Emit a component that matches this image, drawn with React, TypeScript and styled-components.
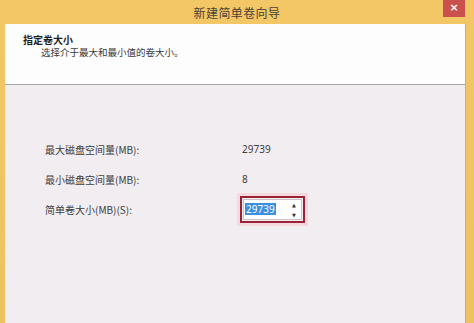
import React from "react";
import styled, { createGlobalStyle } from "styled-components";

const Global = createGlobalStyle`
  html, body { margin: 0; padding: 0; background: #f1c563; }
  body { font-family: "Noto Sans CJK SC", "Noto Sans", sans-serif; }
  * { box-sizing: border-box; }
`;

const Window = styled.div`
  width: 474px;
  height: 323px;
  display: flex;
  flex-direction: column;
  background: linear-gradient(#f3c766, #efc260);
  overflow: hidden;
`;

const TitleBar = styled.div`
  height: 24px;
  flex: none;
  display: grid;
  grid-template-columns: 1fr auto 1fr;
  align-items: start;
`;

const Title = styled.div`
  grid-column: 2;
  height: 24px;
  line-height: 25px;
  font-size: 12px;
  letter-spacing: 0.4px;
  color: #4a4236;
`;

const CloseButton = styled.div`
  grid-column: 3;
  justify-self: end;
  margin-right: 9px;
  width: 22px;
  height: 17px;
  background: #c9504c;
  color: #fff;
  font-family: "DejaVu Sans", sans-serif;
  font-size: 11px;
  font-weight: bold;
  line-height: 16px;
  text-align: center;
`;

const Client = styled.div`
  flex: 1;
  margin: 0 8px 0 5px;
  display: flex;
  flex-direction: column;
  border-right: 1px solid #dcae4f;
`;

const Header = styled.div`
  height: 61px;
  flex: none;
  background: #fdfdfd;
  border-bottom: 1px solid #a4a2a4;
  padding: 9px 0 0 18px;
`;

const HeaderTitle = styled.div`
  font-size: 10px;
  font-weight: bold;
  line-height: 13px;
  color: #1e1e1e;
`;

const HeaderSub = styled.div`
  font-size: 9.5px;
  line-height: 13px;
  color: #3a3a3a;
  margin-left: 18px;
`;

const Body = styled.div`
  flex: 1;
  background: #f1edf1;
  padding: 49px 0 0 40px;
  display: flex;
  flex-direction: column;
`;

const Row = styled.div`
  height: 30px;
  display: grid;
  grid-template-columns: 197px auto;
  align-items: center;
`;

const Label = styled.div`
  font-size: 10px;
  color: #3c3c3c;
`;

const Value = styled.div`
  font-family: "Noto Sans", sans-serif;
  font-size: 10px;
  color: #3c3c3c;
`;

const Highlight = styled.div`
  width: 65px;
  height: 27px;
  margin-left: -2px;
  border: 2px solid #9c2236;
  padding: 1px;
  box-shadow: 0 0 0 3px rgba(250, 200, 205, 0.55);
  display: flex;
`;

const SpinBox = styled.div`
  flex: 1;
  display: flex;
  align-items: center;
  background: #ffffff;
  border: 1px solid #c8c6c8;
  padding-left: 1px;
`;

const Selected = styled.span`
  font-family: "Noto Sans", sans-serif;
  font-size: 10px;
  line-height: 12px;
  background: #3b8ee0;
  color: #ffffff;
  padding: 0 1px;
`;

const Spacer = styled.div`
  flex: 1;
`;

const Spinner = styled.div`
  width: 10px;
  height: 100%;
  display: flex;
  flex-direction: column;
  margin-right: 2px;
`;

const SpinArrow = styled.div`
  flex: 1;
  font-family: "DejaVu Sans", sans-serif;
  font-size: 5px;
  line-height: 10px;
  text-align: center;
  color: #333;
`;

export default function App() {
  return (
    <>
      <Global />
      <Window>
        <TitleBar>
          <Title>新建简单卷向导</Title>
          <CloseButton>×</CloseButton>
        </TitleBar>
        <Client>
          <Header>
            <HeaderTitle>指定卷大小</HeaderTitle>
            <HeaderSub>选择介于最大和最小值的卷大小。</HeaderSub>
          </Header>
          <Body>
            <Row>
              <Label>最大磁盘空间量(MB):</Label>
              <Value>29739</Value>
            </Row>
            <Row>
              <Label>最小磁盘空间量(MB):</Label>
              <Value>8</Value>
            </Row>
            <Row>
              <Label>简单卷大小(MB)(S):</Label>
              <Highlight>
                <SpinBox>
                  <Selected>29739</Selected>
                  <Spacer />
                  <Spinner>
                    <SpinArrow>▲</SpinArrow>
                    <SpinArrow>▼</SpinArrow>
                  </Spinner>
                </SpinBox>
              </Highlight>
            </Row>
          </Body>
        </Client>
      </Window>
    </>
  );
}
